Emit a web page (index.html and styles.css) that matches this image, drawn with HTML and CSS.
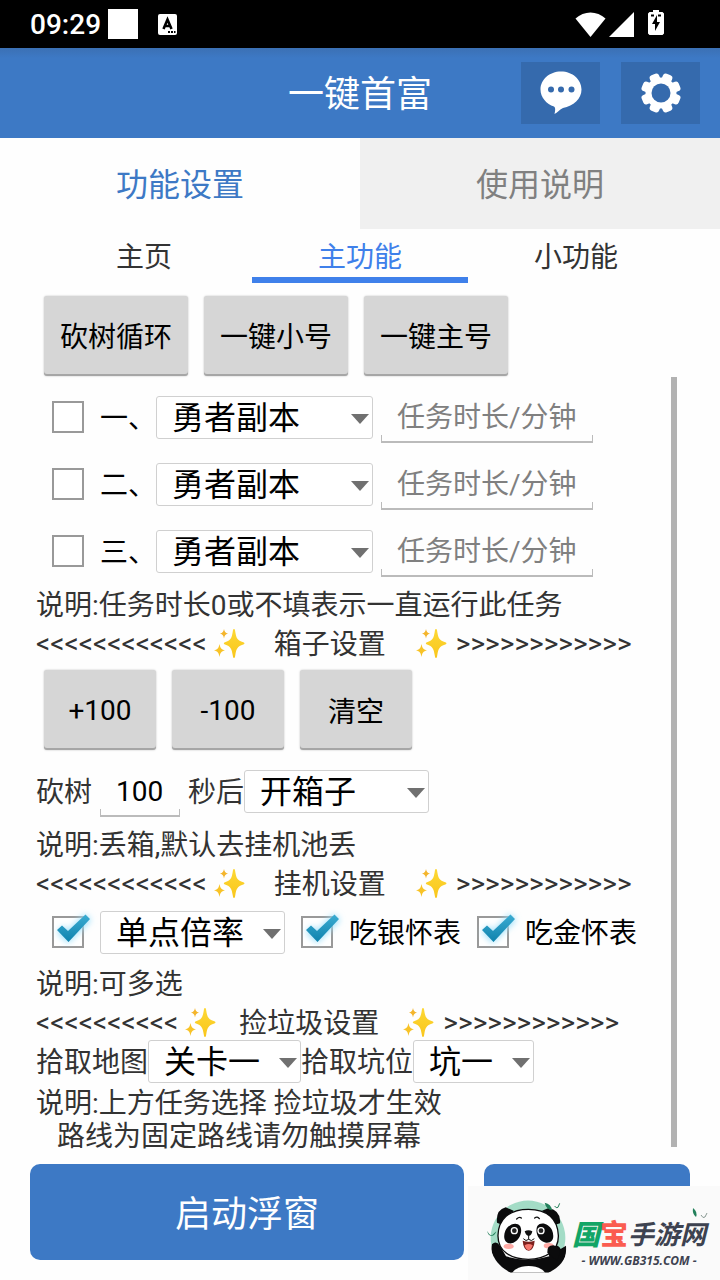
FILE: index.html
```
<!DOCTYPE html>
<html lang="zh-CN">
<head>
	<meta charset="utf-8">
	<meta name="viewport" content="width=device-width, initial-scale=1">
	<title>一键首富</title>
	<link rel="stylesheet" href="styles.css">
</head>
<body>
	<!-- sparkle used in the section titles -->
	<svg width="0" height="0" class="defs">
		<defs>
			<linearGradient id="gold" x1="0" y1="0" x2="0" y2="1">
				<stop offset="0" stop-color="#fdd835"/>
				<stop offset="1" stop-color="#f9c61c"/>
			</linearGradient>
			<symbol id="sparkle" viewBox="0 0 32 32">
				<path fill="url(#gold)" d="M21 1c1 0 1 1 1.300 3 1 6 2 8.500 8 10.300 1.600.5 1.600 1.700 0 2.200-6 1.800-7 4.500-8 10.500-.3 2-.4 3-1.300 3s-1-1-1.300-3c-1-6-2-8.700-7.700-10.500-1.600-.5-1.600-1.700 0-2.200 5.700-1.800 6.700-4.300 7.700-10.300C20 2 20 1 21 1z"/>
				<path fill="#f4b52c" d="M11 1c.6 2.800 1.200 3.700 4 4.600-2.800.9-3.400 2-4 4.800-.6-2.800-1.200-3.900-4-4.800 2.800-.9 3.400-1.800 4-4.600z"/>
				<path fill="#f8c327" d="M6.500 16c.8 4 1.600 5.200 5.500 6.300-3.900 1.100-4.700 2.700-5.500 6.700-.8-4-1.600-5.600-5.500-6.700C4.900 21.200 5.700 20 6.500 16z"/>
			</symbol>
		</defs>
	</svg>

	<div class="status-bar">
		<span class="clock">09:29</span>
		<span class="square"></span>
		<svg class="ime" width="19" height="21" viewBox="0 0 19 21">
			<rect width="19" height="21" rx="2" fill="#fff"/>
			<path d="M5.500 15 9.500 5.500 13.500 15M7 12h5" fill="none" stroke="#000" stroke-width="2.600"/>
			<path d="M10 18h2M13 18h2M16 18h1.500" stroke="#000" stroke-width="2"/>
		</svg>
		<div class="status-icons">
			<svg width="31" height="25" viewBox="0 0 31 25"><path fill="#fff" d="M.5 6.500C9-1.500 22-1.500 30.500 6.500L15.500 25z"/></svg>
			<svg width="25" height="25" viewBox="0 0 25 25"><path fill="#fff" d="M25 0v25H0z"/></svg>
			<svg class="battery" width="16" height="25" viewBox="0 0 16 25">
				<path fill="#fff" d="M5 0h6v2h3.500L16 3.500V23.500L14.500 25h-13L0 23.500V3.500L1.500 2H5z"/>
				<path d="M9 5v7h3L7 21v-7H4z"/>
				<path d="M3 4.500h3v2H3zM10 4.500h3v2h-3z"/>
			</svg>
		</div>
	</div>

	<header class="app-bar">
		<h1>一键首富</h1>
		<div class="actions">
			<button aria-label="消息">
				<svg width="42" height="44" viewBox="0 0 42 44">
					<path fill="#fff" d="M21 .5C9.500.5.5 8.500.5 18.500c0 8 6 14.500 13.500 17 1.500.7 1.500 3.500.5 7.500 3-1.500 4.500-4 8.500-6C33.500 35 41.500 28 41.500 18.500 41.500 8.500 32.500.5 21 .5z"/>
					<g fill="#356aad"><circle cx="11" cy="18.500" r="3"/><circle cx="21" cy="18.500" r="3"/><circle cx="31.500" cy="18.500" r="3"/></g>
				</svg>
			</button>
			<button aria-label="设置">
				<svg width="42" height="42" viewBox="-21 -21 42 42">
					<g fill="#fff">
						<circle r="15.500"/>
						<rect x="-5" y="-20" width="10" height="40" rx="3" transform="rotate(22.500)"/>
						<rect x="-5" y="-20" width="10" height="40" rx="3" transform="rotate(67.500)"/>
						<rect x="-5" y="-20" width="10" height="40" rx="3" transform="rotate(112.500)"/>
						<rect x="-5" y="-20" width="10" height="40" rx="3" transform="rotate(157.500)"/>
					</g>
					<circle r="9.500" fill="#356aad"/>
				</svg>
			</button>
		</div>
	</header>

	<nav class="tabs">
		<button class="active">功能设置</button>
		<button>使用说明</button>
	</nav>
	<nav class="subtabs">
		<button>主页</button>
		<button class="active">主功能</button>
		<button>小功能</button>
	</nav>

	<main class="content">
		<div class="panel">
			<div class="button-row">
				<button class="wide">砍树循环</button>
				<button class="wide">一键小号</button>
				<button class="wide">一键主号</button>
			</div>

			<div class="row task">
				<input type="checkbox" id="task1">
				<label for="task1">一、</label>
				<select class="w-task" aria-label="任务一"><option>勇者副本</option></select>
				<input type="text" class="duration" placeholder="任务时长/分钟" aria-label="任务一时长">
			</div>
			<div class="row task">
				<input type="checkbox" id="task2">
				<label for="task2">二、</label>
				<select class="w-task" aria-label="任务二"><option>勇者副本</option></select>
				<input type="text" class="duration" placeholder="任务时长/分钟" aria-label="任务二时长">
			</div>
			<div class="row task">
				<input type="checkbox" id="task3">
				<label for="task3">三、</label>
				<select class="w-task" aria-label="任务三"><option>勇者副本</option></select>
				<input type="text" class="duration" placeholder="任务时长/分钟" aria-label="任务三时长">
			</div>
			<p class="note">说明:任务时长0或不填表示一直运行此任务</p>

			<h2 class="section">
				<span>&lt;&lt;&lt;&lt;&lt;&lt;&lt;&lt;&lt;&lt;&lt;&lt;</span>
				<svg width="32" height="32"><use href="#sparkle"/></svg>
				<span class="name">箱子设置</span>
				<svg width="32" height="32"><use href="#sparkle"/></svg>
				<span class="right">&gt;&gt;&gt;&gt;&gt;&gt;&gt;&gt;&gt;&gt;&gt;&gt;</span>
			</h2>
			<div class="button-row">
				<button>+100</button>
				<button>-100</button>
				<button>清空</button>
			</div>
			<div class="row task">
				<label for="seconds">砍树</label>
				<input type="text" id="seconds" class="seconds" value="100">
				<label for="after">秒后</label>
				<select id="after" class="w-box"><option>开箱子</option></select>
			</div>
			<p class="note">说明:丢箱,默认去挂机池丢</p>

			<h2 class="section">
				<span>&lt;&lt;&lt;&lt;&lt;&lt;&lt;&lt;&lt;&lt;&lt;&lt;</span>
				<svg width="32" height="32"><use href="#sparkle"/></svg>
				<span class="name">挂机设置</span>
				<svg width="32" height="32"><use href="#sparkle"/></svg>
				<span class="right">&gt;&gt;&gt;&gt;&gt;&gt;&gt;&gt;&gt;&gt;&gt;&gt;</span>
			</h2>
			<div class="row idle">
				<input type="checkbox" id="rate" aria-label="单点倍率" checked>
				<select class="w-box" aria-label="倍率"><option>单点倍率</option></select>
				<input type="checkbox" id="silver" checked>
				<label for="silver">吃银怀表</label>
				<input type="checkbox" id="golden" checked>
				<label for="golden">吃金怀表</label>
			</div>
			<p class="note">说明:可多选</p>

			<h2 class="section narrow">
				<span>&lt;&lt;&lt;&lt;&lt;&lt;&lt;&lt;&lt;&lt;</span>
				<svg width="32" height="32"><use href="#sparkle"/></svg>
				<span class="name">捡垃圾设置</span>
				<svg width="32" height="32"><use href="#sparkle"/></svg>
				<span class="right">&gt;&gt;&gt;&gt;&gt;&gt;&gt;&gt;&gt;&gt;&gt;&gt;</span>
			</h2>
			<div class="row pick">
				<label for="map">拾取地图</label>
				<select id="map" class="w-map"><option>关卡一</option></select>
				<label for="pit">拾取坑位</label>
				<select id="pit" class="w-pit"><option>坑一</option></select>
			</div>
			<p class="note last">说明:上方任务选择 捡垃圾才生效<br><span class="indent">路线为固定路线请勿触摸屏幕</span></p>
		</div>
		<div class="scroll-thumb"></div>
	</main>

	<footer class="bottom-bar">
		<button class="start">启动浮窗</button>
		<button class="other" aria-label="更多"></button>
	</footer>

	<div class="watermark">
		<svg class="panda" width="100" height="90" viewBox="0 0 300 270">
			<clipPath id="round"><path d="M30 0H260V180Q255 225 205 248H92Q35 220 30 160z"/></clipPath>
			<path d="M38 180A112 112 0 1 1 250 180z" fill="#a3dcc6"/>
			<g clip-path="url(#round)">
				<path d="M36 163q12-12 24 4l18 32q66 20 130 0l-6-14q2-18 20-20 14 0 20 12l16-10q4 40-22 66-30 25-92 25T50 222Q30 195 36 163z" fill="#0b0b0c"/>
				<ellipse cx="146" cy="262" rx="54" ry="34" fill="#fff"/>
			</g>
			<path d="M51 98q-4-38 26-46l24 10-32 44zM240 100q4-38-34-46l-20 8 34 44z" fill="#0b0b0c"/>
			<path d="M145 58c58 0 88 30 90 78 2 46-38 72-90 72s-92-24-91-72c1-48 33-78 91-78z" fill="#fff" stroke="#0b0b0c" stroke-width="4"/>
			<path d="M76 122c10-20 34-28 44-14 10 16-2 48-26 52-20 2-26-18-18-38zM216 120c-10-20-34-26-44-12-8 16 2 46 26 50 22 2 26-18 18-38z" fill="#0b0b0c"/>
			<circle cx="103" cy="122" r="11" fill="#fff"/><circle cx="183" cy="122" r="11" fill="#fff"/>
			<circle cx="103" cy="122" r="7" fill="#222"/><circle cx="183" cy="122" r="7" fill="#222"/>
			<path d="M110 87q8-8 14-3M164 84q8-6 14 2" fill="none" stroke="#111" stroke-width="4" stroke-linecap="round"/>
			<ellipse cx="86" cy="169" rx="15" ry="8" fill="#ffaaa5"/><ellipse cx="206" cy="167" rx="15" ry="8" fill="#ffaaa5"/>
			<path d="M134 124q11-6 23 0-2 12-11 14-9-2-12-14z" fill="#111"/>
			<path d="M146 136v12m-16-2q8 10 16 2 8 8 17-2" fill="none" stroke="#111" stroke-width="3"/>
			<path d="M128 152q18 6 36 0-2 28-18 30-16-2-18-30z" fill="#7d211e"/>
			<path d="M134 166q12-8 24 0-4 14-12 15-9-1-12-15z" fill="#f6776e"/>
			<path d="M202 188q-2-22 18-22 16 2 20 20l-8 26z" fill="#0b0b0c"/>
			<path d="M194 38q20 4 22 23-18-4-22-23zM22 122q4 12 14 14l13-12q-4 12-14 14-12-2-13-16z" fill="#23805b"/>
			<path d="M224 48q4 8 10 4l5-12" fill="none" stroke="#23805b" stroke-width="3"/>
		</svg>
		<div class="brand">
			<div class="brand-name"><b class="green">国</b><b class="red">宝</b><i>手游网</i></div>
			<div class="brand-url">- WWW.GB315.COM -</div>
		</div>
		<svg class="leaf" width="16" height="12" viewBox="0 0 16 12">
			<path d="M1 0q5 4 3 9Q0 6 1 0z" fill="#23805b"/>
			<path d="M9 7q2 4 4 2l2-4" fill="none" stroke="#8a9a94"/>
		</svg>
	</div>
</body>
</html>
```
FILE: styles.css
```
* {
	box-sizing: border-box;
}

body {
	position: relative;
	display: flex;
	flex-direction: column;
	min-height: 100vh;
	margin: 0;
	background-color: #fefefe;
	color: #333;
	font-family: Roboto, "Noto Sans CJK SC", sans-serif;
	font-size: 28px;
}

button, input, select {
	margin: 0;
	padding: 0;
	border: none;
	border-radius: 0;
	background: none;
	color: #000;
	font: inherit;
}

.defs {
	position: absolute;
}

/* status bar */
.status-bar {
	display: flex;
	align-items: center;
	height: 48px;
	padding: 0 56px 0 30px;
	background-color: #000;
	color: #fff;
}

.clock {
	font-weight: 500;
}

.square {
	width: 30px;
	height: 30px;
	margin: 0 20px 0 7px;
	background-color: #fff;
}

.status-icons {
	display: flex;
	align-items: center;
	gap: 3px;
	margin-left: auto;
}

.battery {
	margin: 0 0 4px 11px;
}

/* header */
.app-bar {
	display: grid;
	grid-template-columns: 1fr auto 1fr;
	align-items: center;
	height: 90px;
	padding: 0 20px;
	background: linear-gradient(#3b70b4, #3d79c5 10px);
}

h1 {
	grid-column: 2;
	margin: 0;
	padding-bottom: 4px;
	color: #fff;
	font-size: 36px;
	font-weight: 400;
}

.actions {
	display: flex;
	justify-content: flex-end;
	gap: 21px;
}

.actions button {
	display: flex;
	align-items: center;
	justify-content: center;
	width: 79px;
	height: 62px;
	background-color: #356aad;
}

.tabs {
	display: flex;
	height: 91px;
}

.tabs button {
	flex: 1;
	padding-bottom: 4px;
	background-color: #f0f0f0;
	color: #808080;
	font-size: 32px;
}

.tabs .active {
	background-color: #fefefe;
	color: #3d79c5;
}

.subtabs {
	display: flex;
	height: 54px;
	padding: 0 36px;
}

.subtabs button {
	flex: 1;
	border-bottom: 6px solid transparent;
	padding-top: 4px;
	color: #333;
}

.subtabs .active {
	border-color: #3f80ea;
	color: #3f80ea;
}

/* settings */
.content {
	display: flex;
	justify-content: space-between;
	padding: 0 43px 0 36px;
}

.button-row {
	display: flex;
	gap: 16px;
	padding: 7px 8px 8px;
}

.button-row:first-child {
	padding-top: 13px;
}

.button-row button {
	width: 112px;
	height: 80px;
	border-radius: 3px;
	background-color: #d6d6d6;
	box-shadow: inset 0 -2px 0 #a6a6a6, 0 0 2px #bbb;
}

.button-row .wide {
	width: 144px;
	padding-bottom: 2px;
}

.row {
	display: flex;
	align-items: center;
	white-space: nowrap;
}

.row.task {
	height: 67px;
}

.row.idle {
	height: 61px;
	padding-bottom: 3px;
}

.row.pick {
	height: 41px;
	padding-bottom: 2px;
}

.row label {
	padding-bottom: 3px;
}

.task label, .idle label {
	color: #000;
}

.task label[for="seconds"], .task label[for="after"] {
	color: #333;
}

input[type="checkbox"] {
	appearance: none;
	width: 64px;
	height: 48px;
	background: url("data:image/svg+xml,%3Csvg xmlns='http://www.w3.org/2000/svg' width='64' height='48'%3E%3Crect x='17' y='8' width='30' height='30' fill='%23fff' stroke='%23999' stroke-width='2'/%3E%3C/svg%3E") center no-repeat;
}

input[type="checkbox"]:checked {
	background-image: url("data:image/svg+xml,%3Csvg xmlns='http://www.w3.org/2000/svg' width='64' height='48'%3E%3Cdefs%3E%3Cfilter id='g' x='-50%25' y='-50%25' width='200%25' height='200%25'%3E%3CfeGaussianBlur stdDeviation='3'/%3E%3C/filter%3E%3ClinearGradient id='b' x1='0' y1='0' x2='0' y2='1'%3E%3Cstop offset='0' stop-color='%233bacd2'/%3E%3Cstop offset='1' stop-color='%230f82ad'/%3E%3C/linearGradient%3E%3C/defs%3E%3Crect x='17' y='9' width='30' height='30' fill='%23fff' stroke='%23999' stroke-width='2'/%3E%3Cpath d='M24 21L32 29 52 9' fill='none' stroke='%239fe0fa' stroke-width='9' filter='url(%23g)'/%3E%3Cpath d='M21 22L26 17.500 32 23 49.500 6.500 54 11 32.500 34z' fill='url(%23b)'/%3E%3C/svg%3E");
}

select {
	appearance: none;
	height: 43px;
	padding: 1px 0 0 15px;
	border: 1px solid #d0d0d0;
	border-radius: 3px;
	background: #fff url("data:image/svg+xml,%3Csvg xmlns='http://www.w3.org/2000/svg' width='18' height='10'%3E%3Cpath d='M0 0H18L9 10z' fill='%23707070'/%3E%3C/svg%3E") right 3px top 17px no-repeat;
	font-size: 32px;
	line-height: 41px;
}

.w-task {
	width: 217px;
}

.w-box {
	width: 185px;
}

.w-map {
	width: 153px;
}

.w-pit {
	width: 121px;
}

/* text field with a bracket shaped underline */
input[type="text"] {
	height: 50px;
	margin: 0 8px;
	padding: 0 16px;
	background:
		linear-gradient(#bbb, #bbb) left bottom / 100% 2px no-repeat,
		linear-gradient(#bbb, #bbb) left bottom / 1px 8px no-repeat,
		linear-gradient(#bbb, #bbb) right bottom / 1px 8px no-repeat;
}

input::placeholder {
	color: #808080;
	opacity: 1;
}

.duration {
	width: 212px;
}

.seconds {
	width: 80px;
}

.note {
	height: 39px;
	margin: 0;
	line-height: 41px;
}

.note.last {
	height: auto;
	padding-top: 4px;
	line-height: 33px;
}

.indent {
	padding-left: 21px;
}

.section {
	display: flex;
	align-items: center;
	gap: 6px;
	height: 39px;
	margin: 0;
	font-size: 28px;
	font-weight: 400;
	white-space: nowrap;
}

.section .name {
	padding: 0 23px 4px;
}

.section.narrow .name {
	padding: 0 17px 4px;
}

.section .right {
	padding-left: 3px;
}

.scroll-thumb {
	width: 6px;
	margin: 94px 0 6px;
	background-color: #b2b2b2;
}

/* footer */
.bottom-bar {
	display: flex;
	gap: 20px;
	padding: 11px 30px 20px;
}

.bottom-bar button {
	height: 96px;
	padding-bottom: 2px;
	border-radius: 10px;
	background-color: #3d79c5;
	color: #fff;
	font-size: 36px;
}

.start {
	flex: 434;
}

.other {
	flex: 206;
}

.watermark {
	position: absolute;
	right: 0;
	bottom: 0;
	display: flex;
	width: 252px;
	height: 94px;
	padding: 4px 0 0 12px;
	background-color: #fafafa;
}

.brand {
	display: flex;
	flex-direction: column;
	align-items: center;
	margin-left: -8px;
	padding-top: 26px;
	color: #3d4250;
	font-family: "Open Sans", "Noto Sans CJK SC", sans-serif;
	font-weight: 700;
	white-space: nowrap;
}

.brand-name {
	display: flex;
	align-items: center;
	height: 36px;
	font-size: 26px;
	line-height: 32px;
}

.brand-name .green, .brand-name .red {
	font-size: 28px;
	font-weight: 900;
}

.brand-name .green {
	color: #12a566;
	font-style: italic;
}

.brand-name .red {
	color: #fa5c50;
}

.brand-url {
	font-size: 12px;
	font-style: italic;
	line-height: 18px;
}

.leaf {
	position: absolute;
	top: 22px;
	right: 12px;
}
```
